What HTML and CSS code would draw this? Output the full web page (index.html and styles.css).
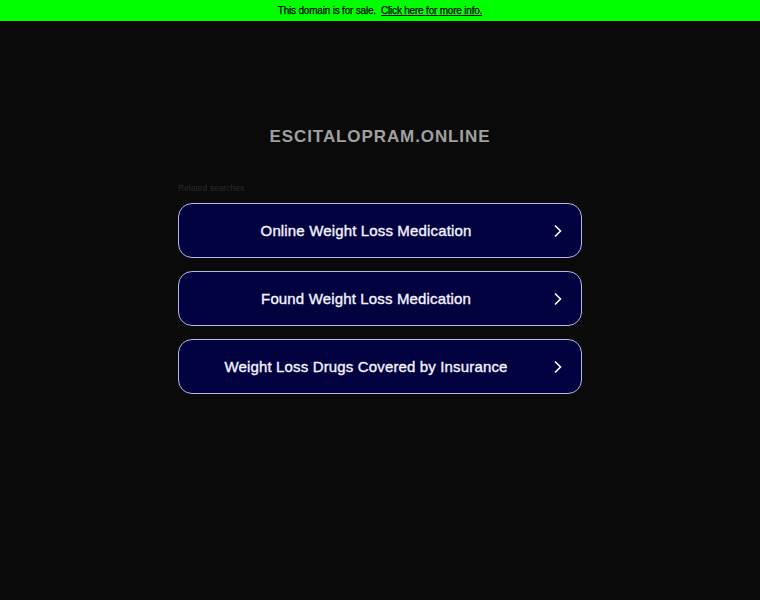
FILE: index.html
```html
<!DOCTYPE html>
<html>
<head>
<meta charset="utf-8">
<link rel="stylesheet" href="styles.css">
</head>
<body>
<div class="topbar">This domain is for sale. &nbsp;<a href="#">Click here for more info.</a></div>
<div class="main">
  <h1 class="domain">ESCITALOPRAM.ONLINE</h1>
  <div class="related">
    <div class="label">Related searches</div>
    <a class="btn" href="#"><span class="txt">Online Weight Loss Medication</span><svg class="chev" viewBox="0 0 10 14" width="10" height="14"><path d="M2 1.5 L7.5 7 L2 12.5" fill="none" stroke="#fff" stroke-width="1.6"/></svg></a>
    <a class="btn" href="#"><span class="txt">Found Weight Loss Medication</span><svg class="chev" viewBox="0 0 10 14" width="10" height="14"><path d="M2 1.5 L7.5 7 L2 12.5" fill="none" stroke="#fff" stroke-width="1.6"/></svg></a>
    <a class="btn" href="#"><span class="txt">Weight Loss Drugs Covered by Insurance</span><svg class="chev" viewBox="0 0 10 14" width="10" height="14"><path d="M2 1.5 L7.5 7 L2 12.5" fill="none" stroke="#fff" stroke-width="1.6"/></svg></a>
  </div>
</div>
</body>
</html>
```
FILE: styles.css
```css
html, body { margin: 0; padding: 0; }
body {
  background: #0a0a0a;
  font-family: "Liberation Sans", Arial, sans-serif;
  min-height: 600px;
}
.topbar {
  background: #00ff00;
  height: 21px;
  line-height: 21px;
  text-align: center;
  font-size: 10px;
  letter-spacing: -0.2px;
  color: #000;
  -webkit-text-stroke: 0.25px #000;
}
.topbar a { color: #000; text-decoration: underline; -webkit-text-stroke: 0.25px #000; }
.main {
  display: flex;
  flex-direction: column;
  align-items: center;
}
.domain {
  margin: 105px 0 0 0;
  font-size: 17px;
  font-weight: bold;
  letter-spacing: 0.9px;
  color: #a0a0a0;
  line-height: 22px;
}
.related {
  width: 404px;
  margin-top: 35px;
  display: flex;
  flex-direction: column;
  gap: 13px;
}
.label {
  font-size: 8.5px;
  color: #2c2c2c;
  margin-bottom: -4px;
  line-height: 11px;
}
.btn {
  display: flex;
  align-items: center;
  box-sizing: border-box;
  height: 55px;
  border: 1px solid #b8b8e8;
  border-radius: 14px;
  background: #020240;
  text-decoration: none;
  color: #f4f4ff;
  padding: 0 18px 0 0;
}
.txt {
  flex: 1;
  text-align: center;
  font-size: 15px;
  font-weight: normal;
  letter-spacing: 0.15px;
  -webkit-text-stroke: 0.35px #f4f4ff;
}
.chev { flex: none; }
```
